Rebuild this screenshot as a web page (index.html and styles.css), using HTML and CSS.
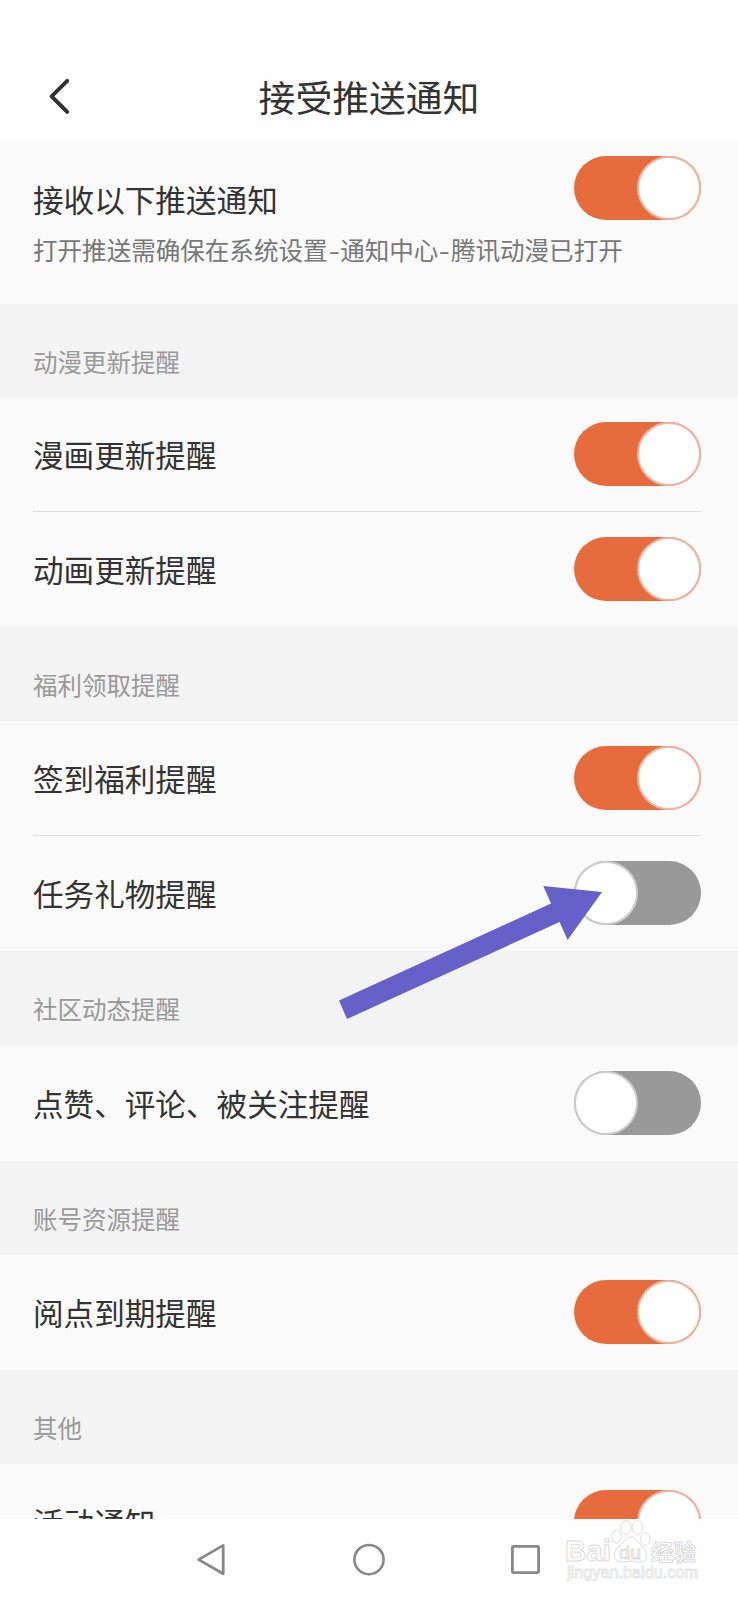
FILE: index.html
```html
<!DOCTYPE html>
<html lang="zh-CN">
<head>
<meta charset="utf-8">
<title>接受推送通知</title>
<link rel="stylesheet" href="styles.css">
</head>
<body>
<div class="screen">
  <header class="header">
    <svg class="back" width="28" height="40" viewBox="0 0 28 40"><path d="M21.2 4.8 5.6 20.3 21.2 35.8" fill="none" stroke="#333" stroke-width="4" stroke-linecap="round" stroke-linejoin="round"/></svg>
    <h1 class="title">接受推送通知</h1>
  </header>
  <main class="content">
    <section class="master">
      <div class="master-text">
        <div class="label">接收以下推送通知</div>
        <div class="hint">打开推送需确保在系统设置<span class="dash">-</span>通知中心<span class="dash">-</span>腾讯动漫已打开</div>
      </div>
      <span class="toggle on"><span class="knob"></span></span>
    </section>

    <h2 class="group">动漫更新提醒</h2>
    <div class="list">
      <div class="row"><span class="label">漫画更新提醒</span><span class="toggle on"><span class="knob"></span></span></div>
      <div class="row"><span class="label">动画更新提醒</span><span class="toggle on"><span class="knob"></span></span></div>
    </div>

    <h2 class="group">福利领取提醒</h2>
    <div class="list">
      <div class="row"><span class="label">签到福利提醒</span><span class="toggle on"><span class="knob"></span></span></div>
      <div class="row"><span class="label">任务礼物提醒</span><span class="toggle"><span class="knob"></span></span></div>
    </div>

    <h2 class="group">社区动态提醒</h2>
    <div class="list single">
      <div class="row"><span class="label">点赞、评论、被关注提醒</span><span class="toggle"><span class="knob"></span></span></div>
    </div>

    <h2 class="group">账号资源提醒</h2>
    <div class="list single">
      <div class="row"><span class="label">阅点到期提醒</span><span class="toggle on"><span class="knob"></span></span></div>
    </div>

    <h2 class="group">其他</h2>
    <div class="list single">
      <div class="row"><span class="label">活动通知</span><span class="toggle on"><span class="knob"></span></span></div>
    </div>
  </main>
  <nav class="navbar">
    <svg width="32" height="36" viewBox="0 0 32 36"><path d="M27.2 3.4V31.8L2.6 17.6Z" fill="none" stroke="#888" stroke-width="2.8" stroke-linejoin="round"/></svg>
    <svg width="32" height="36" viewBox="0 0 32 36"><circle cx="16" cy="17.6" r="14.6" fill="none" stroke="#888" stroke-width="2.6"/></svg>
    <svg width="32" height="36" viewBox="0 0 32 36"><rect x="2.4" y="4.4" width="26.2" height="26.2" rx="1" fill="none" stroke="#888" stroke-width="2.8"/></svg>
  </nav>

  <svg class="arrow" width="270" height="140" viewBox="335 885 270 140"><path d="M339 1000.5 551 903.5 543.3 886 602 892 567.6 940 559.6 922 347 1019Z" fill="#6661c9"/></svg>

  <svg class="watermark" width="140" height="68" viewBox="562 1516 140 68">
    <g fill="#fff" stroke="#dcdcdc" stroke-width="1">
      <ellipse cx="616.5" cy="1536.5" rx="4.7" ry="6.4"/>
      <ellipse cx="626" cy="1527.5" rx="5.3" ry="6.8"/>
      <ellipse cx="637.5" cy="1527.5" rx="5.3" ry="6.8"/>
      <ellipse cx="645.5" cy="1539" rx="4.7" ry="6.4"/>
      <path d="M631 1537C626 1537 624 1542 619 1546C613 1551 612 1561 621 1562C627 1562.5 628 1561 631 1561C634 1561 636 1562.5 641 1562C649 1561 648 1551 642 1546C637 1542 636 1537 631 1537Z"/>
    </g>
    <g class="mark-text">
      <text x="565" y="1561" font-size="29" textLength="46" lengthAdjust="spacingAndGlyphs" class="bold">Bai</text>
      <text x="619" y="1559" font-size="18" textLength="22" lengthAdjust="spacingAndGlyphs">du</text>
      <text x="651" y="1560" font-size="22" textLength="45" lengthAdjust="spacingAndGlyphs" class="bold">经验</text>
      <text x="567" y="1578" font-size="16" textLength="131" lengthAdjust="spacingAndGlyphs" class="url">jingyan.baidu.com</text>
    </g>
  </svg>
</div>
</body>
</html>
```

FILE: styles.css
```css
* { box-sizing: border-box; }

body {
  margin: 0;
  background: #fff;
  font-family: "Noto Sans CJK SC", sans-serif;
}

.screen {
  position: relative;
  display: flex;
  flex-direction: column;
  width: 738px;
  height: 1600px;
  overflow: hidden;
  background: #fefefe;
}

.header {
  display: grid;
  grid-template-columns: 100px 1fr 100px;
  align-items: center;
  height: 142px;
  padding-top: 50px;
  flex: none;
}

.back { margin-left: 46px; }

.title {
  margin: 0;
  font-size: 36.8px;
  line-height: 48px;
  font-weight: 400;
  text-align: center;
  color: #333;
}

.content {
  flex: 1;
  min-height: 0;
  overflow: hidden;
  background: #fafafa;
}

.master {
  display: flex;
  justify-content: space-between;
  align-items: flex-start;
  height: 162px;
  padding: 14px 37px 0 33px;
}

.master-text { padding-top: 22px; white-space: nowrap; width: 541px; }

.label {
  font-size: 30.6px;
  line-height: 42px;
  color: #333;
  white-space: nowrap;
}

.hint {
  margin-top: 13px;
  font-size: 24.55px;
  line-height: 34px;
  color: #777;
}

.dash {
  display: inline-block;
  width: 12.6px;
  text-align: center;
  transform: scaleX(1.3);
}

.group {
  margin: 0;
  height: 94px;
  padding: 41px 33px 0;
  background: #f3f3f3;
  font-size: 24.5px;
  line-height: 34px;
  font-weight: 400;
  color: #999;
}

.master + .group { height: 93px; }

.list { padding: 0 37px 0 33px; }

.row {
  display: flex;
  justify-content: space-between;
  align-items: center;
  height: 114px;
}

.row + .row {
  height: 116px;
  padding-bottom: 1px;
  border-top: 1px solid #dedede;
}

.single .row { height: 115.5px; }

.toggle {
  display: flex;
  flex: none;
  width: 127px;
  height: 64px;
  border-radius: 32px;
  background: #999;
}

.toggle.on { justify-content: flex-end; background: #e66c3e; }

.knob {
  width: 64px;
  height: 64px;
  border: 2px solid #ccc;
  border-radius: 50%;
  background: #fff;
}

.on .knob { border-color: #ecb5a1; }

.navbar {
  display: flex;
  flex: none;
  gap: 125px;
  height: 81px;
  padding: 23px 0 0 196px;
}

.arrow { position: absolute; left: 335px; top: 885px; }

.watermark { position: absolute; left: 562px; top: 1516px; }

.mark-text {
  font-family: "Liberation Sans", "Noto Sans CJK SC", sans-serif;
  fill: #fff;
  stroke: #d9d9d9;
  stroke-width: 0.9px;
}

.bold { font-weight: 700; }

.url { stroke: #e2e2e2; stroke-width: 0.8px; }
```
